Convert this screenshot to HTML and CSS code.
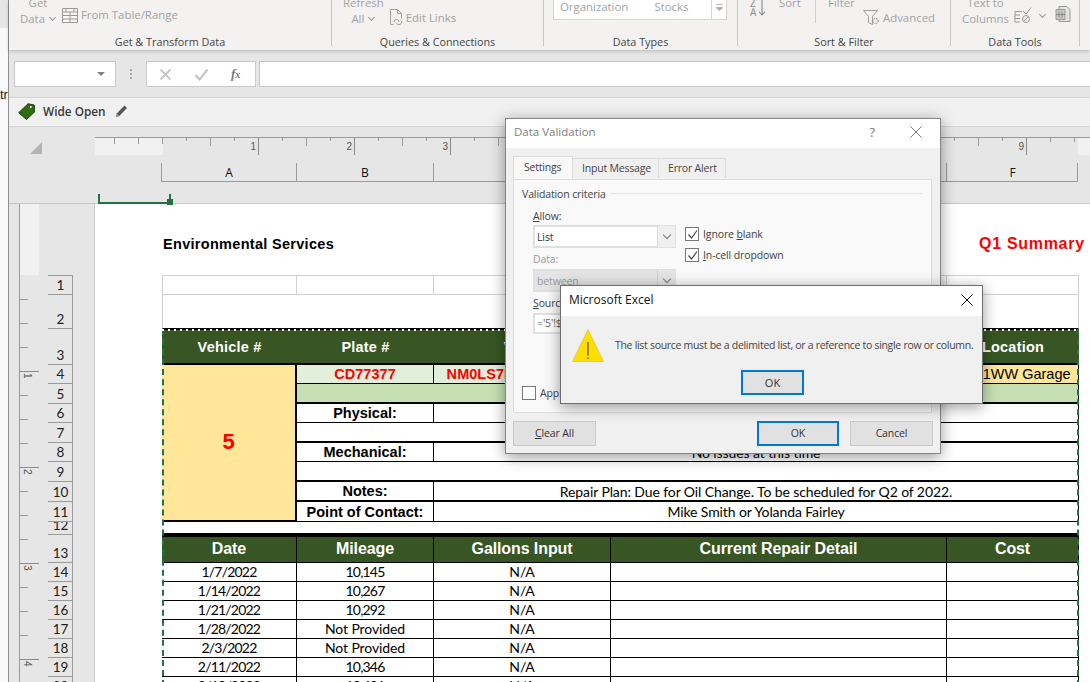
FILE: index.html
```html
<!DOCTYPE html>
<html lang="en">
<head>
<meta charset="utf-8">
<title>Excel - Data Validation</title>
<link rel="stylesheet" href="styles.css">
</head>
<body>
<div class="app">
  <aside class="strip"><div class="strip-block"></div><div class="strip-text">tr</div></aside>
  <div class="main">
    <header class="ribbon">
      <section class="group g1">
        <div class="group-body">
          <div class="stack"><span>Get</span><span>Data <i class="chev"></i></span></div>
          <div class="inline-cmd cmd-table">
            <svg width="16" height="16" viewBox="0 0 16 16"><path d="M.5 1.500h15v14H.5zM.5 5h15M.5 8.500h15M.5 12h15M8 5v10.500M4 1.500v3.500M12 1.500v3.500" fill="#f8f8f8" stroke="#9a9a9a"/></svg>
            <span>From Table/Range</span>
          </div>
        </div>
        <div class="group-label">Get &amp; Transform Data</div>
      </section>
      <section class="group g2">
        <div class="group-body">
          <div class="stack"><span>Refresh</span><span>All <i class="chev"></i></span></div>
          <div class="inline-cmd cmd-links">
            <svg width="14" height="17" viewBox="0 0 14 17"><path d="M1.500.5h7l4 4v5M8.500.5v4h4M1.500.5v15h3" fill="none" stroke="#a0a0a0"/><path d="M5 13a2.500 2.500 0 0 1 5 0M12.500 12a2.500 2.500 0 0 1-5 2" fill="none" stroke="#a0a0a0"/></svg>
            <span>Edit Links</span>
          </div>
        </div>
        <div class="group-label">Queries &amp; Connections</div>
      </section>
      <section class="group g3">
        <div class="group-body">
          <div class="types-box">
            <span class="type-a">Organization</span><span class="type-b">Stocks</span>
            <span class="types-scroll"><svg width="9" height="9" viewBox="0 0 9 9"><path d="M1 1.500h7M1 4.500l3.500 3 3.500-3z" fill="#aaa" stroke="#aaa" stroke-width=".7"/></svg></span>
          </div>
        </div>
        <div class="group-label">Data Types</div>
      </section>
      <section class="group g4">
        <div class="group-body">
          <div class="az"><span class="az-letters">Z<br>A</span><svg width="8" height="17" viewBox="0 0 8 17"><path d="M4 0v15.500M.8 12.500L4 16l3.200-3.500" fill="none" stroke="#8a8a8a" stroke-width="1.100"/></svg></div>
          <span class="top-word word-sort">Sort</span>
          <i class="mini-sep"></i>
          <span class="top-word word-filter">Filter</span>
          <div class="inline-cmd cmd-adv">
            <svg width="17" height="17" viewBox="0 0 17 17"><path d="M.5 1.500h14l-5 6v8l-4-2v-6z" fill="none" stroke="#a0a0a0"/><circle cx="12.500" cy="12" r="2.600" fill="none" stroke="#8a8a8a" stroke-dasharray="1.500 1"/></svg>
            <span>Advanced</span>
          </div>
        </div>
        <div class="group-label">Sort &amp; Filter</div>
      </section>
      <section class="group g5">
        <div class="group-body">
          <div class="stack"><span>Text to</span><span>Columns</span></div>
          <svg class="tool-a" width="18" height="17" viewBox="0 0 18 17"><path d="M1 4.500h7M1 8h5M1 11.500h5M1 15h5M1 4.500V15" fill="none" stroke="#9a9a9a"/><path d="M9 4l3 3 5-6.500" fill="none" stroke="#9a9a9a"/><circle cx="12" cy="12" r="3.500" fill="none" stroke="#9a9a9a"/><path d="M9.500 14.500l5-5" stroke="#9a9a9a"/></svg>
          <i class="chev tool-chev"></i>
          <svg class="tool-b" width="17" height="17" viewBox="0 0 17 17"><path d="M4 .5h8l3 3v12H4z" fill="#e2e2e2" stroke="#9a9a9a"/><path d="M1 3.500h9v10H1z" fill="#c8c8c8" stroke="#9a9a9a"/><path d="M4 5.500v6M7 5.500v6M1 8.500h9" stroke="#8a8a8a"/></svg>
        </div>
        <div class="group-label">Data Tools</div>
      </section>
    </header>

    <div class="formula-bar">
      <div class="name-box"><i class="name-arrow"></i></div>
      <div class="grip"><i></i><i></i><i></i></div>
      <div class="fx-box">
        <svg width="13" height="13" viewBox="0 0 13 13"><path d="M1.500 1.500l10 10M11.500 1.500l-10 10" stroke="#c6c6c6" stroke-width="1.800"/></svg>
        <svg width="15" height="13" viewBox="0 0 15 13"><path d="M1.500 7l4 4.500 8-10" fill="none" stroke="#c6c6c6" stroke-width="2.200"/></svg>
        <span class="fx">f<small>x</small></span>
      </div>
      <div class="formula-input"></div>
    </div>

    <div class="tag-bar">
      <svg width="17" height="17" viewBox="0 0 17 17"><path d="M10 .8l6.200 1.200.8 6.500-8.500 8-7.800-6.800z" fill="#2f6b12" stroke="#1e3d10"/><circle cx="12.800" cy="4" r="1" fill="#fff"/></svg>
      <span class="tag-name">Wide Open</span>
      <svg width="13" height="14" viewBox="0 0 13 14"><path d="M1 13l.8-3.500L9.500 1.500l2.500 2.500-7.700 8z" fill="#555"/><path d="M1 13l.8-3.500 2.500 2.500z" fill="#999"/></svg>
    </div>

    <div class="sheet">
      <div class="sheet-head">
        <div class="corner"></div>
        <div class="h-ruler">
          <div class="h-margin"></div>
          <div class="h-inch"><span>1</span></div><div class="h-inch"><span>2</span></div><div class="h-inch"><span>3</span></div>
          <div class="h-inch"><span>4</span></div><div class="h-inch"><span>5</span></div><div class="h-inch"><span>6</span></div>
          <div class="h-inch"><span>7</span></div><div class="h-inch"><span>8</span></div><div class="h-inch"><span>9</span></div>
          <div class="h-rest"></div><div class="h-end"></div>
        </div>
      </div>
      <div class="col-heads">
        <div class="col w-a">A</div><div class="col w-b">B</div><div class="col w-c">C</div><div class="col w-d">D</div><div class="col w-e">F</div>
      </div>
      <div class="select-strip"><div class="select-mark"></div></div>

      <div class="sheet-body">
        <div class="gutter">
          <div class="v-ruler">
            <div class="v-margin"></div>
            <div class="v-inch first"></div>
            <div class="v-inch"><span>1</span></div>
            <div class="v-inch"><span>2</span></div>
            <div class="v-inch"><span>3</span></div>
            <div class="v-inch"><span>4</span></div>
          </div>
          <div class="row-heads">
            <div class="rh r19">1</div><div class="rh r34">2</div><div class="rh r36">3</div><div class="rh r19">4</div>
            <div class="rh r20">5</div><div class="rh r19">6</div><div class="rh r20">7</div><div class="rh r19">8</div>
            <div class="rh r20">9</div><div class="rh r20">10</div><div class="rh r20">11</div><div class="rh r13">12</div>
            <div class="rh r28">13</div><div class="rh r19">14</div><div class="rh r19">15</div><div class="rh r19">16</div>
            <div class="rh r19">17</div><div class="rh r19">18</div><div class="rh r19">19</div><div class="rh r19">20</div>
          </div>
        </div>

        <div class="page">
          <div class="titles">
            <span class="title-left">Environmental Services</span>
            <span class="title-right">Q1 Summary</span>
          </div>
          <div class="grid">
            <div class="c light top"></div><div class="c light top"></div><div class="c light top"></div><div class="c light top"></div><div class="c light top"></div>
            <div class="c light span5 row2"></div>

            <div class="c head-a">Vehicle #</div><div class="c head-a">Plate #</div><div class="c head-a">VIN #</div><div class="c head-a"></div><div class="c head-a">Location</div>

            <div class="c yellow-big">5</div>
            <div class="c pale red line2r">CD77377</div><div class="c pale red">NM0LS7E77H1234567</div><div class="c pale"></div><div class="c yellow-cell">3121WW Garage</div>
            <div class="c green span4 thick"></div>
            <div class="c label">Physical:</div><div class="c value span3">Good</div>
            <div class="c blank span4 thick"></div>
            <div class="c label">Mechanical:</div><div class="c value span3">No issues at this time</div>
            <div class="c blank span4 thick"></div>
            <div class="c label thick">Notes:</div><div class="c value span3 thick">Repair Plan: Due for Oil Change. To be scheduled for Q2 of 2022.</div>
            <div class="c label">Point of Contact:</div><div class="c value span3">Mike Smith or Yolanda Fairley</div>

            <div class="c spacer span5"></div>

            <div class="c head-b">Date</div><div class="c head-b">Mileage</div><div class="c head-b">Gallons Input</div><div class="c head-b">Current Repair Detail</div><div class="c head-b">Cost</div>

            <div class="c d num">1/7/2022</div><div class="c d num">10,145</div><div class="c d">N/A</div><div class="c d"></div><div class="c d"></div>
            <div class="c d num">1/14/2022</div><div class="c d num">10,267</div><div class="c d">N/A</div><div class="c d"></div><div class="c d"></div>
            <div class="c d num">1/21/2022</div><div class="c d num">10,292</div><div class="c d">N/A</div><div class="c d"></div><div class="c d"></div>
            <div class="c d num">1/28/2022</div><div class="c d">Not Provided</div><div class="c d">N/A</div><div class="c d"></div><div class="c d"></div>
            <div class="c d num">2/3/2022</div><div class="c d">Not Provided</div><div class="c d">N/A</div><div class="c d"></div><div class="c d"></div>
            <div class="c d num">2/11/2022</div><div class="c d num">10,346</div><div class="c d">N/A</div><div class="c d"></div><div class="c d"></div>
            <div class="c d num">2/18/2022</div><div class="c d num">10,401</div><div class="c d">N/A</div><div class="c d"></div><div class="c d"></div>

            <div class="ants"></div>
          </div>
        </div>
      </div>
    </div>
  </div>

  <div class="dialog dv">
    <div class="dlg-title dv-title">
      <span>Data Validation</span>
      <span class="dv-help">?</span>
      <svg width="12" height="12" viewBox="0 0 12 12"><path d="M.5.500l11 11M11.500.500l-11 11" stroke="#777" fill="none"/></svg>
    </div>
    <div class="dv-body">
      <div class="tabs">
        <div class="tab active">Settings</div><div class="tab t-input">Input Message</div><div class="tab t-err">Error Alert</div>
      </div>
      <div class="panel">
        <div class="criteria"><span>Validation criteria</span><i></i></div>
        <div class="fields">
          <div class="field-col">
            <div class="f-label"><u>A</u>llow:</div>
            <div class="select"><span>List</span><b><i class="chev dark"></i></b></div>
            <div class="f-label muted">Data:</div>
            <div class="select off"><span>between</span><b><i class="chev dark"></i></b></div>
            <div class="f-label src-label"><u>S</u>ource:</div>
            <div class="src-input">='5'!$B$4:$F$4</div>
          </div>
          <div class="check-col">
            <label class="check"><i class="box"><svg width="13" height="13" viewBox="0 0 13 13"><path d="M2.500 6.500l3 3.500 5.500-7.500" fill="none" stroke="#444" stroke-width="1.200"/></svg></i><span>Ignore <u>b</u>lank</span></label>
            <label class="check"><i class="box"><svg width="13" height="13" viewBox="0 0 13 13"><path d="M2.500 6.500l3 3.500 5.500-7.500" fill="none" stroke="#444" stroke-width="1.200"/></svg></i><span><u>I</u>n-cell dropdown</span></label>
          </div>
        </div>
        <label class="check apply"><i class="box"></i><span>Apply these changes to all other cells</span></label>
      </div>
      <div class="dv-buttons">
        <div class="btn b-clear"><u>C</u>lear All</div>
        <div class="btn primary b-ok">OK</div>
        <div class="btn b-cancel">Cancel</div>
      </div>
    </div>
  </div>

  <div class="dialog alert">
    <div class="dlg-title alert-title">
      <span>Microsoft Excel</span>
      <svg width="12" height="12" viewBox="0 0 12 12"><path d="M.5.500l11 11M11.500.500l-11 11" stroke="#111" fill="none"/></svg>
    </div>
    <div class="alert-body">
      <div class="alert-msg">
        <svg width="32" height="33" viewBox="0 0 32 33"><path d="M16 .5L31.500 32.500H.5z" fill="#ffdd00" stroke="#d9c53a" stroke-width=".7"/><path d="M16 13v13.500" stroke="#333" stroke-width="1"/><path d="M16 28.500v1.500" stroke="#333" stroke-width="1"/></svg>
        <span>The list source must be a delimited list, or a reference to single row or column.</span>
      </div>
      <div class="btn primary alert-ok">OK</div>
    </div>
  </div>
</div>
</body>
</html>
```
FILE: styles.css
```css
* { box-sizing: border-box; }
html, body { margin: 0; padding: 0; }
body { width: 1090px; height: 682px; overflow: hidden; background: #fff; font-family: "Open Sans", "Liberation Sans", sans-serif; }
i { font-style: normal; }
u { text-decoration: underline; text-underline-offset: 1px; }

.app { position: relative; display: flex; width: 1090px; height: 682px; overflow: hidden; }

/* left strip */
.strip { width: 9px; flex: none; background: #fafafa; border-right: 1px solid #8f8f8f; overflow: hidden; }
.strip-block { height: 28px; background: #e6e6e6; }
.strip-text { margin-top: 59px; font: 13px/16px "Liberation Sans", sans-serif; color: #222; }
.main { flex: 1; min-width: 0; display: flex; flex-direction: column; }

/* ribbon */
.ribbon { display: flex; height: 50px; flex: none; background: #f3f2f1; position: relative; z-index: 2; box-shadow: 0 1px 4px rgba(0,0,0,.22); font-size: 11.400px; color: #a2a2a2; }
.group { display: flex; flex-direction: column; height: 46px; border-right: 1px solid #c8c8c8; }
.g1 { width: 323px; } .g2 { width: 212px; } .g3 { width: 194px; } .g4 { width: 213px; } .g5 { width: 129px; }
.group-body { height: 35px; display: flex; align-items: flex-start; overflow: hidden; }
.group-label { height: 14px; margin-bottom: -3px; font-size: 10.800px; line-height: 13px; color: #444; text-align: center; }
.stack { display: flex; flex-direction: column; align-items: center; margin-top: -5px; line-height: 16px; }
.g1 .group-body { padding-left: 11px; }
.g2 .group-body { padding-left: 11px; }
.chev { display: inline-block; width: 5px; height: 5px; border-right: 1px solid #999; border-bottom: 1px solid #999; transform: rotate(45deg); margin: 0 1px 3px 2px; }
.chev.dark { border-color: #777; width: 6px; height: 6px; margin: 0 0 3px; }
.inline-cmd { display: flex; align-items: center; gap: 3px; line-height: 16px; }
.cmd-table { margin: 7px 0 0 6px; }
.cmd-links { margin: 9px 0 0 5px; }
.cmd-adv { margin: 9px 0 0 -2px; }
.types-box { width: 174px; height: 26px; margin: -6px 0 0 9px; background: #fff; border: 1px solid #d4d4d4; display: flex; align-items: center; padding-left: 6px; line-height: 16px; }
.type-a { width: 95px; } .type-b { width: 57px; }
.types-scroll { width: 15px; height: 24px; border-left: 1px solid #d4d4d4; display: flex; align-items: center; justify-content: center; }
.az { display: flex; margin: -1px 0 0 12px; gap: 2px; width: 29px; }
.az-letters { font-size: 10px; line-height: 9px; color: #8a8a8a; }
.top-word { margin-top: -5px; line-height: 16px; }
.word-sort { width: 36px; }
.mini-sep { width: 1px; height: 23px; background: #d0d0d0; }
.word-filter { margin-left: 12px; width: 37px; }
.g5 .group-body { padding-left: 11px; }
.tool-a { margin: 7px 0 0 5px; }
.tool-chev { margin: 12px 0 0 8px; }
.tool-b { margin: 6px 0 0 10px; }

/* formula bar */
.formula-bar { height: 47px; flex: none; background: #e6e6e6; display: flex; align-items: flex-start; padding: 11px 0 0 5px; }
.name-box { width: 102px; height: 26px; background: #fff; border: 1px solid #c8c8c8; display: flex; align-items: center; justify-content: flex-end; padding-right: 10px; }
.name-arrow { width: 0; height: 0; border: 4px solid transparent; border-top: 4px solid #808080; border-bottom: 0; }
.grip { width: 30px; height: 26px; display: flex; flex-direction: column; align-items: center; justify-content: center; gap: 2px; }
.grip i { width: 2px; height: 2px; background: #a8a8a8; }
.fx-box { width: 110px; height: 26px; background: #fff; border: 1px solid #c8c8c8; display: flex; align-items: center; padding-left: 12px; gap: 22px; }
.fx { font: italic bold 13px/16px "Liberation Serif", serif; color: #777; }
.fx small { font-size: 10px; }
.formula-input { flex: 1; height: 26px; margin-left: 3px; background: #fff; border: 1px solid #c8c8c8; border-right: 0; }

/* tag bar */
.tag-bar { height: 30px; flex: none; background: #f0f0f0; border-top: 1px solid #d4d4d4; border-bottom: 1px solid #d4d4d4; display: flex; align-items: center; padding: 0 0 2px 9px; }
.tag-name { margin: 0 9px 0 8px; font-size: 11.800px; font-weight: 600; color: #3a3a3a; }

/* sheet chrome */
.sheet { flex: 1; min-height: 0; background: #e6e6e6; display: flex; flex-direction: column; overflow: hidden; }
.sheet-head { display: flex; height: 28px; flex: none; padding-top: 10px; }
.corner { width: 86px; flex: none; padding: 5px 0 0 21px; }
.corner::after { content: ""; display: block; width: 0; height: 0; border-left: 12px solid transparent; border-bottom: 12px solid #b4b4b4; }
.h-ruler { flex: 1; display: flex; border-top: 1px solid #9a9a9a; }
.h-margin { width: 68px; background-color: #f1f1f1; background-image: repeating-linear-gradient(90deg, #9a9a9a 0 1px, transparent 1px 24px); background-size: 100% 6px; background-repeat: no-repeat; background-position: 19px 0; }
.h-inch { width: 96px; flex: none; border-right: 1px solid #8a8a8a; display: flex; justify-content: flex-end; padding-right: 2px; font: 10px/14px "Liberation Sans", sans-serif; color: #555;
  background-image: repeating-linear-gradient(90deg, transparent 0 23px, #9a9a9a 23px 24px), linear-gradient(90deg, transparent 47px, #9a9a9a 47px 48px, transparent 48px);
  background-size: 100% 3px, 100% 8px; background-repeat: no-repeat; }
.h-inch span { padding-top: 2px; }
.h-rest { width: 51px; flex: none; background-image: repeating-linear-gradient(90deg, transparent 0 23px, #9a9a9a 23px 24px); background-size: 100% 4px; background-repeat: no-repeat; }
.h-end { flex: 1; background: #f1f1f1; }
.col-heads { display: flex; height: 27px; flex: none; padding: 8px 0 0 152px; }
.col { height: 19px; border-left: 1px solid #9a9a9a; border-bottom: 1px solid #9a9a9a; text-align: center; font: 12px/20px "Open Sans", sans-serif; color: #111; }
.w-a { width: 135px; } .w-b { width: 137px; } .w-c { width: 177px; } .w-d { width: 336px; } .w-e { width: 132px; border-right: 1px solid #9a9a9a; text-indent: 1px; }
.select-strip { height: 22px; flex: none; padding: 12px 0 0 89px; border-bottom: 1px solid #c8c8c8; }
.select-mark { position: relative; width: 72px; height: 10px; border-left: 2px solid #217346; border-bottom: 2px solid #217346; }
.select-mark::after { content: ""; position: absolute; right: -3px; bottom: -3px; width: 6px; height: 6px; background: #217346; }
.select-mark::before { content: ""; position: absolute; right: -1px; top: 0; height: 6px; width: 2px; background: #217346; }

.sheet-body { flex: 1; min-height: 0; display: flex; }
.gutter { width: 86px; flex: none; display: flex; padding-left: 10px; overflow: hidden; }
.v-ruler { width: 20px; flex: none; border-left: 1px solid #9a9a9a; margin-right: 9px; }
.v-margin { height: 71px; background: #f1f1f1; }
.v-inch { height: 96px; border-top: 1px solid #8a8a8a;
  background-image: repeating-linear-gradient(180deg, transparent 0 23px, #9a9a9a 23px 24px), linear-gradient(180deg, transparent 47px, #9a9a9a 47px 48px, transparent 48px);
  background-size: 8px 100%, 8px 100%; background-repeat: no-repeat; }
.v-inch.first { border-top-color: transparent; }
.v-inch span { display: block; writing-mode: vertical-rl; font: 10px/12px "Liberation Sans", sans-serif; color: #555; margin-left: 1px; padding-top: 1px; }
.row-heads { width: 25px; flex: none; margin-top: 71px; border-right: 1px solid #9a9a9a; border-top: 1px solid #9a9a9a; }
.rh { display: flex; align-items: flex-end; justify-content: center; border-bottom: 1px solid #9a9a9a; overflow: hidden; font: 13.500px/17px "Lato", sans-serif; color: #222; padding-left: 1px; }
.r13 { height: 13px; } .r19 { height: 19px; } .r20 { height: 20px; } .r28 { height: 28px; } .r34 { height: 34px; } .r36 { height: 36px; }

/* printed page */
.page { flex: 1; min-width: 0; background: #fff; padding-left: 67px; border-left: 1px solid #c8c8c8; margin-left: -1px; }
.titles { height: 71px; display: flex; align-items: flex-start; padding: 31px 0 0 1px; font: bold 14.500px/18px "Liberation Sans", sans-serif; letter-spacing: .3px; color: #000; white-space: nowrap; }
.title-right { margin-left: 645px; color: #ff0000; font-size: 16px; letter-spacing: .7px; }
.grid { position: relative; width: 917px; display: grid; grid-template-columns: 135px 137px 177px 336px 132px;
  grid-template-rows: 20px 34px 36px 19px 20px 19px 20px 19px 20px 20px 20px 13px 28px repeat(7, 19px); }
.c { min-width: 0; display: flex; align-items: center; justify-content: center; white-space: nowrap; overflow: hidden; color: #000; font: 14px/18px "Lato", sans-serif; letter-spacing: -.1px; border-bottom: 1px solid #000; border-right: 1px solid #000; }
.light { border-color: #d0d0d0; }
.light.top { border-top: 1px solid #d0d0d0; }
.light.top:first-child, .row2 { border-left: 1px solid #d0d0d0; }
.row2 { border-bottom-color: #000; }
.span5 { grid-column: span 5; }
.span4 { grid-column: span 4; }
.span3 { grid-column: span 3; }
.head-a { background: #375623; color: #fff; font: bold 14.500px/18px "Liberation Sans", sans-serif; letter-spacing: .2px; border: 0; border-top: 1px solid #000; border-bottom: 2px solid #000; }
.head-b { background: #375623; color: #fff; font: bold 16px/20px "Liberation Sans", sans-serif; letter-spacing: -.1px; border-top: 2px solid #000; padding-bottom: 1px; }
.yellow-big { grid-row: span 8; background: #ffe699; color: #ff0000; font: bold 22px/24px "Liberation Sans", sans-serif; border-right: 2px solid #000; border-bottom: 2px solid #000; padding-bottom: 2px; }
.pale { background: #e2efda; }
.red { color: #ff0000; font: bold 14.500px/18px "Liberation Sans", sans-serif; letter-spacing: .05px; }
.yellow-cell { background: #ffe699; font: 14.500px/18px "Liberation Sans", sans-serif; letter-spacing: 0; padding-left: 4px; }
.green { background: #c6e0b4; }
.thick { border-bottom-width: 2px; }
.label { font: bold 14.500px/18px "Liberation Sans", sans-serif; letter-spacing: 0; }
.blank, .value { background: #fff; }
.value { padding-top: 1px; }
.num { letter-spacing: -.8px; }
.spacer { border-right: 0; border-bottom: 2px solid #000; }
.ants { position: absolute; left: 0; right: 0; top: 54px; bottom: 0; border-left: 2px dashed #217346; border-right: 2px dashed #217346; pointer-events: none; }
.ants::before { content: ""; position: absolute; left: -2px; right: -2px; top: 0; height: 2px; background: repeating-linear-gradient(90deg, #fff 0 2px, transparent 2px 6px); }

/* dialogs */
.dialog { position: absolute; border: 1px solid #858585; box-shadow: 0 3px 14px rgba(0,0,0,.4); display: flex; flex-direction: column; background: #f0f0f0; }
.dlg-title { background: #fff; display: flex; align-items: center; flex: none; }
.dv { left: 505px; top: 118px; width: 436px; height: 336px; font-size: 10.500px; color: #333; }
.dv-title { height: 29px; padding: 0 18px 4px 8px; font-size: 11.500px; color: #808080; }
.dv-help { margin-left: auto; margin-right: 35px; font-size: 13px; }
.dv-body { flex: 1; display: flex; flex-direction: column; padding: 8px 7px 0; letter-spacing: -.12px; }
.tabs { display: flex; height: 23px; flex: none; }
.tab { height: 20px; margin-top: 2px; border: 1px solid #dcdcdc; border-bottom: 0; border-left: 0; padding: 0 0 0 9px; line-height: 18px; color: #444; background: #f0f0f0; letter-spacing: -.2px; }
.tab.active { width: 60px; height: 23px; margin-top: 0; background: #f9f9f9; border-left: 1px solid #dcdcdc; padding-left: 10px; line-height: 21px; }
.t-input { width: 86px; } .t-err { width: 67px; }
.panel { width: 419px; height: 234px; flex: none; background: #f9f9f9; border: 1px solid #dcdcdc; padding: 6px 8px 0; position: relative; }
.criteria { display: flex; align-items: center; gap: 4px; height: 15px; color: #444; }
.criteria i { flex: 1; height: 1px; background: #e6e6e6; }
.fields { display: flex; padding-left: 11px; margin-top: 8px; }
.field-col { width: 143px; flex: none; }
.f-label { line-height: 14px; height: 14px; color: #444; }
.f-label.muted { color: #999; margin-top: 4px; }
.f-label.src-label { margin-top: 4px; }
.select { height: 23px; margin-top: 2px; border: 2px solid #e0e0e0; background: #fff; display: flex; align-items: center; justify-content: space-between; padding-left: 2px; }
.select b { width: 18px; height: 21px; margin-right: -1px; background: #efefef; border-left: 1px solid #dadada; display: flex; align-items: center; justify-content: center; font-weight: 400; }
.select.off { background: #e4e4e4; color: #9a9a9a; margin-top: 3px; }
.select.off b { background: #e4e4e4; border-color: #cfcfcf; }
.src-input { width: 143px; height: 21px; margin-top: 3px; border: 2px solid #e0e0e0; background: #fff; line-height: 17px; padding-left: 2px; color: #666; white-space: nowrap; overflow: hidden; }
.check-col { margin: 18px 0 0 9px; display: flex; flex-direction: column; gap: 7px; }
.check { display: flex; align-items: center; gap: 4px; color: #444; line-height: 14px; height: 14px; }
.box { width: 14px; height: 14px; border: 1px solid #777; background: #fff; display: flex; flex: none; }
.box svg { margin: -.5px; }
.apply { position: absolute; left: 8px; top: 206px; white-space: nowrap; }
.dv-buttons { display: flex; height: 25px; margin-top: 8px; flex: none; }
.btn { height: 25px; border: 1px solid #c9c9c9; background: #e1e1e1; text-align: center; line-height: 23px; color: #333; }
.btn.primary { border: 2px solid #0078d7; line-height: 21px; }
.b-clear { width: 83px; }
.b-ok { width: 82px; margin-left: 161px; }
.b-cancel { width: 83px; margin-left: 11px; }

.alert { left: 560px; top: 285px; width: 423px; height: 119px; border-color: #6e6e6e; }
.alert-title { height: 30px; padding: 0 9px 3px 8px; justify-content: space-between; font-size: 12px; color: #111; }
.alert-body { flex: 1; display: flex; flex-direction: column; align-items: flex-start; font-size: 10.500px; color: #444; }
.alert-msg { display: flex; align-items: center; gap: 11px; padding: 13px 0 0 11px; white-space: nowrap; letter-spacing: -.3px; }
.alert-msg span { padding-bottom: 1px; }
.alert-ok { width: 63px; margin: 8px 0 0 180px; color: #333; font-size: 11px; }
```
